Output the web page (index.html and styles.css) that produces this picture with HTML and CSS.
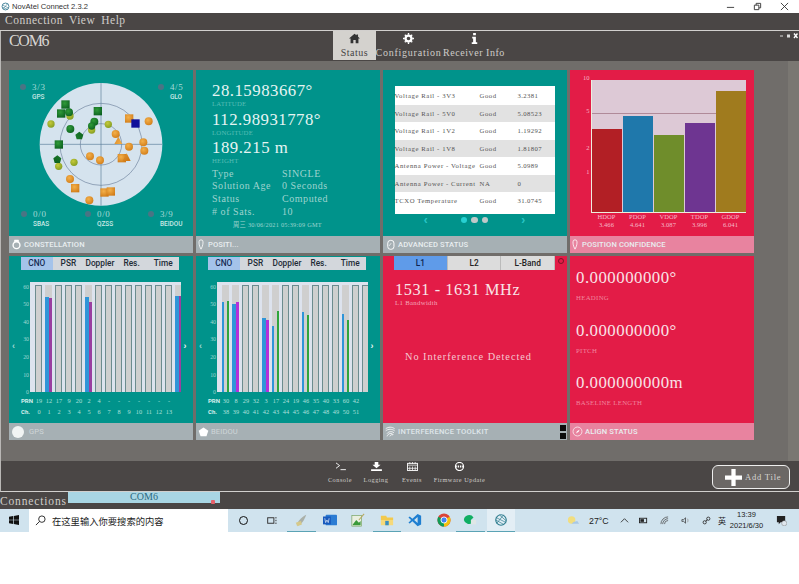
FILE: index.html
```html
<!DOCTYPE html>
<html lang="en">
<head>
<meta charset="utf-8">
<title>NovAtel Connect 2.3.2</title>
<link rel="stylesheet" href="styles.css">
</head>
<body>
<div class="app">
  <header class="titlebar">
    <div class="title-left">
      <svg class="app-logo" viewBox="0 0 12 12"><circle cx="6" cy="6" r="4.6" fill="none" stroke="#3d7f96" stroke-width="1.2"/><path d="M2 4l8 4M3 9l6-7M2 7l7 3" stroke="#3d7f96" stroke-width=".8"/></svg>
      <span>NovAtel Connect 2.3.2</span>
    </div>
    <div class="win-btns">
      <svg viewBox="0 0 10 10"><path d="M1 6h8" stroke="#333"/></svg>
      <svg viewBox="0 0 10 10"><path d="M1.500 3.500h5v5h-5zM3.500 3.500v-2h5v5h-2" fill="none" stroke="#333"/></svg>
      <svg viewBox="0 0 10 10"><path d="M1 1l8 8M9 1l-8 8" stroke="#333"/></svg>
    </div>
  </header>
  <nav class="menubar"><span>Connection</span><span>View</span><span>Help</span></nav>

  <div class="frame">
    <div class="subhead">
      <div class="com-title">COM6</div>
      <div class="nav-tabs">
        <div class="nav-tab active">
          <svg viewBox="0 0 14 12"><path d="M7 0L0 6h2v6h3.500V8h3v4H12V6h2l-2.500-2.200V1h-2v1z" fill="#333"/></svg>
          <span>Status</span>
        </div>
        <div class="nav-tab cfg">
          <svg viewBox="0 0 12 12"><circle cx="6" cy="6" r="3.200" fill="none" stroke="#fff" stroke-width="2.400"/><path d="M6 0v12M0 6h12M2 2l8 8M10 2l-8 8" stroke="#fff" stroke-width="1.500" stroke-dasharray="2 8 2 0"/></svg>
          <span>Configuration</span>
        </div>
        <div class="nav-tab info">
          <svg viewBox="0 0 12 12"><path d="M4.500 0h3v2.500h-3zM3.500 4h4v6h1.500v2H3v-2h1.500V6h-1z" fill="#fff"/></svg>
          <span>Receiver Info</span>
        </div>
      </div>
      <div class="frame-ctrl">
        <svg viewBox="0 0 18 6"><path d="M0 3h3" stroke="#ddd"/><rect x="7" y="1.500" width="3" height="3" fill="#ddd"/><path d="M14 .500l3.500 4.500M17.500 .500L14 5" stroke="#fff" stroke-width="1.400"/></svg>
      </div>
    </div>

    <main class="workspace">
      <div class="tiles">
        <!-- Constellation -->
        <section class="tile r1">
          <div class="body teal sky">
            <svg class="sky-plot" viewBox="0 0 540 498">
              <defs>
                <radialGradient id="or" cx=".4" cy=".35" r=".75"><stop offset="0" stop-color="#f3b04a"/><stop offset="1" stop-color="#d07a16"/></radialGradient>
                <radialGradient id="gr" cx=".4" cy=".35" r=".75"><stop offset="0" stop-color="#2f9a38"/><stop offset="1" stop-color="#0b5f1f"/></radialGradient>
                <radialGradient id="li" cx=".4" cy=".35" r=".75"><stop offset="0" stop-color="#c6c93b"/><stop offset="1" stop-color="#7d9a1e"/></radialGradient>
              </defs>
              <circle cx="273" cy="223" r="184" fill="#d5e3ee"/>
              <g fill="none" stroke="#4c6283" stroke-width="1.500"><circle cx="273" cy="223" r="123"/><circle cx="273" cy="223" r="62"/></g>
              <path d="M273 39v368M89 223h368" stroke="#5a7e9c" stroke-width="2"/>
              <g fill="url(#li)"><circle cx="180" cy="138" r="11"/><circle cx="245" cy="180" r="11"/><circle cx="123" cy="162" r="11"/><circle cx="295" cy="163" r="11"/><circle cx="192" cy="277" r="11"/><circle cx="146" cy="289" r="11"/></g>
              <g fill="url(#gr)">
                <rect x="154" y="91" width="25" height="25"/><rect x="141" y="118" width="25" height="25"/><rect x="251" y="111" width="25" height="25"/><rect x="134" y="211" width="25" height="25"/>
                <circle cx="177" cy="127" r="12"/><circle cx="253" cy="155" r="12"/><circle cx="181" cy="177" r="12"/><circle cx="245" cy="168" r="11"/>
                <path d="M208 185l12 9-4 14h-16l-4-14zM142 256l12 9-4 14h-16l-4-14z"/>
              </g>
              <g fill="url(#or)">
                <rect x="345" y="133" width="25" height="25"/><rect x="323" y="252" width="25" height="25"/><rect x="183" y="342" width="25" height="25"/><rect x="271" y="355" width="25" height="25"/><rect x="290" y="352" width="25" height="25"/>
                <circle cx="416" cy="154" r="12"/><circle cx="317" cy="192" r="12"/><circle cx="400" cy="217" r="12"/><circle cx="357" cy="230" r="12"/><circle cx="403" cy="242" r="12"/><circle cx="240" cy="259" r="12"/><circle cx="270" cy="271" r="12"/><circle cx="180" cy="327" r="12"/><circle cx="238" cy="391" r="12"/>
                <path d="M325 200l12 22h-24zM350 250l12 23h-24z"/>
              </g>
              <rect x="364" y="148" width="25" height="25" fill="#10109a"/>
            </svg>
            <div class="sky-row">
              <div class="stat"><i class="dot"></i><div><b>3/3</b><em>GPS</em></div></div>
              <div class="stat"><i class="dot"></i><div><b>4/5</b><em>GLO</em></div></div>
            </div>
            <div class="sky-row bottom">
              <div class="stat"><i class="dot"></i><div><b>0/0</b><em>SBAS</em></div></div>
              <div class="stat"><i class="dot"></i><div><b>0/0</b><em>QZSS</em></div></div>
              <div class="stat"><i class="dot"></i><div><b>3/9</b><em>BEIDOU</em></div></div>
            </div>
          </div>
          <footer class="foot gray">
            <svg class="foot-ic" viewBox="0 0 16 16"><circle cx="8" cy="9" r="5" fill="none" stroke="#fff" stroke-width="2"/><path d="M5 1h6l1 3H4z" fill="#fff"/></svg>
            <span>CONSTELLATION</span>
          </footer>
        </section>

        <!-- Position -->
        <section class="tile r1">
          <div class="body teal pos">
            <div class="big">28.15983667°</div><div class="lab">LATITUDE</div>
            <div class="big">112.98931778°</div><div class="lab">LONGITUDE</div>
            <div class="big">189.215 m</div><div class="lab">HEIGHT</div>
            <dl class="pos-list">
              <dt>Type</dt><dd>SINGLE</dd>
              <dt>Solution Age</dt><dd>0 Seconds</dd>
              <dt>Status</dt><dd>Computed</dd>
              <dt># of Sats.</dt><dd>10</dd>
            </dl>
            <div class="stamp">周三 30/06/2021 05:39:09 GMT</div>
          </div>
          <footer class="foot gray">
            <svg class="foot-ic thin" viewBox="0 0 9 16"><path d="M4.500 15C1.500 10 1.500 6 1.500 4a3 3 0 0 1 6 0c0 2 0 6-3 11z" fill="none" stroke="#fff" stroke-width="1.200"/></svg>
            <span>POSITI...</span>
          </footer>
        </section>

        <!-- Advanced status -->
        <section class="tile r1">
          <div class="body teal adv">
            <div class="adv-table">
              <div class="adv-row"><span>Voltage Rail - 3V3</span><span>Good</span><span>3.2381</span></div>
              <div class="adv-row alt"><span>Voltage Rail - 5V0</span><span>Good</span><span>5.08523</span></div>
              <div class="adv-row"><span>Voltage Rail - 1V2</span><span>Good</span><span>1.19292</span></div>
              <div class="adv-row alt"><span>Voltage Rail - 1V8</span><span>Good</span><span>1.81807</span></div>
              <div class="adv-row"><span>Antenna Power - Voltage</span><span>Good</span><span>5.0989</span></div>
              <div class="adv-row alt"><span>Antenna Power - Current</span><span>NA</span><span>0</span></div>
              <div class="adv-row"><span>TCXO Temperature</span><span>Good</span><span>31.0745</span></div>
            </div>
            <div class="pager">
              <span class="chev">‹</span>
              <span class="dots"><i class="on"></i><i></i><i></i></span>
              <span class="chev">›</span>
            </div>
          </div>
          <footer class="foot gray">
            <svg class="foot-ic" viewBox="0 0 16 16"><rect x="4" y="2" width="9" height="13" rx="4" fill="none" stroke="#fff" stroke-width="1.400"/><path d="M6 10l3-4" stroke="#fff"/></svg>
            <span>ADVANCED STATUS</span>
          </footer>
        </section>

        <!-- Position confidence -->
        <section class="tile r1">
          <div class="body red conf">
            <div class="conf-main">
              <div class="conf-axis"><span>10</span><span>5</span><span>2</span><span>1</span></div>
              <div class="conf-plot">
                <i class="conf-line"></i>
                <div class="cbar c1" style="height:63%"></div>
                <div class="cbar c2" style="height:72.500%"></div>
                <div class="cbar c3" style="height:58.500%"></div>
                <div class="cbar c4" style="height:67.500%"></div>
                <div class="cbar c5" style="height:92%"></div>
              </div>
            </div>
            <div class="conf-labels">
              <div>HDOP<br>3.466</div><div>PDOP<br>4.641</div><div>VDOP<br>3.087</div><div>TDOP<br>3.996</div><div>GDOP<br>6.041</div>
            </div>
          </div>
          <footer class="foot pink">
            <svg class="foot-ic thin" viewBox="0 0 9 16"><path d="M4.500 15C1.500 10 1.500 6 1.500 4a3 3 0 0 1 6 0c0 2 0 6-3 11z" fill="none" stroke="#fff" stroke-width="1.200"/></svg>
            <span>POSITION CONFIDENCE</span>
          </footer>
        </section>

        <!-- GPS -->
        <section class="tile r2">
          <div class="body teal track">
            <div class="tabs5"><span class="on">CNO</span><span>PSR</span><span>Doppler</span><span>Res.</span><span>Time</span></div>
            <div class="chart-wrap">
              <span class="side">‹</span>
              <div class="y-axis"><span>60</span><span>50</span><span>40</span><span>30</span><span>20</span><span>10</span><span>0</span></div>
              <div class="chart">
                <div class="col"></div>
                <div class="col wide"><i class="b-blue" style="height:95px"></i><i class="b-pur" style="height:94px"></i></div>
                <div class="col"></div><div class="col"></div><div class="col"></div>
                <div class="col wide"><i class="b-blue" style="height:95px"></i><i class="b-pur" style="height:90px"></i></div>
                <div class="col"></div><div class="col"></div><div class="col"></div><div class="col"></div><div class="col"></div><div class="col"></div><div class="col"></div><div class="col"></div>
                <div class="col wide"><i class="b-blue" style="height:96px"></i><i class="b-pur" style="height:96px"></i></div>
              </div>
              <span class="side">›</span>
            </div>
            <div class="axis-row prn"><b>PRN</b><span>19</span><span>12</span><span>17</span><span>9</span><span>20</span><span>2</span><span>4</span><span>-</span><span>-</span><span>-</span><span>-</span><span>-</span><span>-</span><span>-</span></div>
            <div class="axis-row"><b>Ch.</b><span>0</span><span>1</span><span>2</span><span>3</span><span>4</span><span>5</span><span>6</span><span>7</span><span>8</span><span>9</span><span>10</span><span>11</span><span>12</span><span>13</span></div>
          </div>
          <footer class="foot gray">
            <i class="foot-circle"></i>
            <span class="dim">GPS</span>
          </footer>
        </section>

        <!-- Beidou -->
        <section class="tile r2">
          <div class="body teal track">
            <div class="tabs5"><span class="on">CNO</span><span>PSR</span><span>Doppler</span><span>Res.</span><span>Time</span></div>
            <div class="chart-wrap">
              <span class="side">‹</span>
              <div class="y-axis"><span>60</span><span>50</span><span>40</span><span>30</span><span>20</span><span>10</span><span>0</span></div>
              <div class="chart">
                <div class="col split"><i class="n-blue" style="height:90px"></i><i class="n-gre" style="height:91px"></i></div>
                <div class="col wide"><i class="n-blue" style="height:88px"></i><i class="n-mag" style="height:90px"></i></div>
                <div class="col"></div><div class="col"></div>
                <div class="col wide"><i class="n-blue" style="height:74px"></i><i class="n-mag" style="height:72px"></i></div>
                <div class="col split"><i class="n-blue" style="height:66px"></i><i class="n-gre" style="height:81px"></i></div>
                <div class="col"></div><div class="col"></div>
                <div class="col split"><i class="n-blue" style="height:80px"></i><i class="n-gre" style="height:77px"></i></div>
                <div class="col"></div><div class="col"></div><div class="col"></div>
                <div class="col split"><i class="n-blue" style="height:78px"></i><i class="n-gre" style="height:72px"></i></div>
                <div class="col"></div><div class="col"></div>
              </div>
              <span class="side">›</span>
            </div>
            <div class="axis-row prn"><b>PRN</b><span>30</span><span>8</span><span>29</span><span>32</span><span>3</span><span>17</span><span>24</span><span>19</span><span>46</span><span>35</span><span>40</span><span>33</span><span>60</span><span>42</span></div>
            <div class="axis-row"><b>Ch.</b><span>38</span><span>39</span><span>40</span><span>41</span><span>42</span><span>43</span><span>44</span><span>45</span><span>46</span><span>47</span><span>48</span><span>49</span><span>50</span><span>51</span></div>
          </div>
          <footer class="foot gray">
            <svg class="foot-ic" viewBox="0 0 16 16"><path d="M8 2l7 5-2.700 8H3.700L1 7z" fill="#fff"/></svg>
            <span class="dim">BEIDOU</span>
          </footer>
        </section>

        <!-- Interference -->
        <section class="tile r2 outlined">
          <div class="body red itk">
            <div class="tabs3"><span class="on">L1</span><span>L2</span><span>L-Band</span><i class="tab-close"></i></div>
            <div class="itk-big">1531 - 1631 MHz</div>
            <div class="itk-lab">L1 Bandwidth</div>
            <div class="itk-msg">No Interference Detected</div>
          </div>
          <footer class="foot gray">
            <svg class="foot-ic" viewBox="0 0 16 16"><path d="M1 4c4-3 9-3 13 0M1 7c4-3 9-3 13 0M3 11c2-3 7-4 10-1M3 15c1-4 7-6 9-2M7 15c1-2 3-3 4-2" fill="none" stroke="#fff" stroke-width="1.200"/></svg>
            <span class="lighter">INTERFERENCE TOOLKIT</span>
            <div class="foot-sq"><i></i><i></i></div>
          </footer>
        </section>

        <!-- Align -->
        <section class="tile r2">
          <div class="body red align">
            <div class="al-big">0.000000000°</div><div class="al-lab">HEADING</div>
            <div class="al-big">0.000000000°</div><div class="al-lab">PITCH</div>
            <div class="al-big">0.000000000m</div><div class="al-lab">BASELINE LENGTH</div>
          </div>
          <footer class="foot pink">
            <svg class="foot-ic" viewBox="0 0 16 16"><circle cx="8" cy="8" r="6.500" fill="none" stroke="#fff"/><path d="M11 5L7 8l-1 3 4-3z" fill="#fff"/></svg>
            <span>ALIGN STATUS</span>
          </footer>
        </section>
      </div>
    </main>

    <div class="toolbar">
      <div class="tools">
        <div class="tool t-con"><svg viewBox="0 0 12 10"><path d="M1 1l4 3-4 3M6 8.500h6" fill="none" stroke="#fff"/></svg><span>Console</span></div>
        <div class="tool t-log"><svg viewBox="0 0 12 10"><path d="M4 0h4v3h2.500L6 7 1.500 3H4zM0 8h12v2H0z" fill="#fff"/></svg><span>Logging</span></div>
        <div class="tool t-eve"><svg viewBox="0 0 12 10"><rect x=".5" y="1.500" width="11" height="8" fill="none" stroke="#fff"/><path d="M1 3.500h10M3 0v2M6 0v2M9 0v2M3 5v4M6 5v4M9 5v4M1 7h10" stroke="#fff" stroke-width=".8"/></svg><span>Events</span></div>
        <div class="tool t-fw"><svg viewBox="0 0 12 10"><ellipse cx="6" cy="5" rx="4.500" ry="4.500" fill="none" stroke="#fff" stroke-width="1.300"/><path d="M1.500 5h9" stroke="#fff" stroke-width="2" stroke-dasharray="1.500 1"/></svg><span>Firmware Update</span></div>
      </div>
      <button class="add-tile"><svg viewBox="0 0 16 16"><path d="M6 0h4v6h6v4h-6v6H6v-6H0V6h6z" fill="#fff"/></svg><span>Add Tile</span></button>
    </div>
  </div>

  <div class="connbar">
    <span class="conn-label">Connections</span>
    <div class="conn-tab"><span>COM6</span><i></i></div>
  </div>

  <div class="taskbar">
    <svg class="tb-win" viewBox="0 0 12 12"><path d="M0 2l5-.8V5.600H0zM5.800 1.100L12 0v5.600H5.800zM0 6.400h5v4.400l-5-.8zM5.800 6.400H12V12l-6.200-1.100z" fill="#111"/></svg>
    <div class="tb-search">
      <svg viewBox="0 0 12 12"><circle cx="7.500" cy="4.500" r="3.500" fill="none" stroke="#222"/><path d="M5 7l-4 4" stroke="#222"/></svg>
      <span>在这里输入你要搜索的内容</span>
    </div>
    <div class="tb-apps">
      <i class="tb-cortana"></i>
      <svg class="tb-app" viewBox="0 0 16 14"><rect x="1" y="3" width="9" height="8" fill="none" stroke="#333" stroke-width="1.400"/><path d="M13 2v2M13 6v2M13 10v2" stroke="#333" stroke-width="1.400"/></svg>
      <div class="tb-slot act"><svg viewBox="0 0 16 16"><path d="M3 14c1-4 5-9 11-12-2 5-4 10-9 12z" fill="#aab0a8"/><path d="M2 11l6-2 1 4-5 2z" fill="#d6c98a"/></svg></div>
      <div class="tb-slot"><svg viewBox="0 0 16 16"><rect x="3" y="2" width="13" height="12" rx="1" fill="#2b7cd3"/><rect x="0" y="4" width="9" height="9" fill="#185abd"/><path d="M2 6l1 5 1.500-3 1.500 3 1-5" fill="none" stroke="#fff" stroke-width=".7"/></svg></div>
      <div class="tb-slot"><svg viewBox="0 0 16 16"><rect x="1" y="3" width="11" height="12" fill="#e9efe0" stroke="#6b9a52" stroke-width=".7"/><path d="M2 13l4-5 3 3 2-2v5H2z" fill="#3a9a3a"/><path d="M9 8l6-7" stroke="#b8a860" stroke-width="1.200"/></svg></div>
      <div class="tb-slot act"><svg viewBox="0 0 16 16"><path d="M1 3h6l1 2h7v3H1z" fill="#f2c94c"/><path d="M1 8h14v6H1z" fill="#f6d97a"/><rect x="6" y="9" width="4" height="5" fill="#3a8fc2"/></svg></div>
      <div class="tb-slot"><svg viewBox="0 0 16 16"><path d="M11 1l4 2v10l-4 2-6-5.500L2 12 0.500 11 3.500 8 .5 5 2 4l3 2.500z" fill="#1f7fd1"/><path d="M11 4.500L7 8l4 3.500z" fill="#cfe3ee"/></svg></div>
      <div class="tb-slot"><svg viewBox="0 0 16 16"><circle cx="8" cy="8" r="7.500" fill="#db4437"/><path d="M8 8L14.500 4.300A7.500 7.500 0 0 1 8 15.500z" fill="#f4c20d"/><path d="M8 8L8 15.500A7.500 7.500 0 0 1 1.500 4.300z" fill="#0f9d58"/><circle cx="8" cy="8" r="3.500" fill="#4285f4" stroke="#fff"/></svg></div>
      <div class="tb-slot act green"><svg viewBox="0 0 16 16"><path d="M1 8a6 6 0 0 1 11-3l-3 3 2 3a6 6 0 0 1-10-3z" fill="#0fae63"/><rect x="9" y="8" width="6" height="5" fill="#dfe7e6"/></svg></div>
      <div class="tb-slot act cur"><svg viewBox="0 0 16 16"><circle cx="8" cy="8" r="6" fill="none" stroke="#2f7d8f" stroke-width="1.300"/><path d="M2 5l12 6M3 12l8-10M2 8l9 5M6 2l8 7" stroke="#2f7d8f" stroke-width=".8"/></svg></div>
    </div>
    <div class="tb-tray">
      <svg class="tr-weather" viewBox="0 0 16 12"><circle cx="6" cy="5" r="4" fill="#f1de80"/><path d="M6 9h8l-2-3-4 1z" fill="#a8c8e6"/></svg>
      <span class="tr-temp">27°C</span>
      <svg class="tr-ic tr-up" viewBox="0 0 10 8"><path d="M1 6l4-4 4 4" fill="none" stroke="#333"/></svg>
      <svg class="tr-ic" viewBox="0 0 10 8"><rect x=".5" y="1.500" width="8" height="5" fill="none" stroke="#222"/><rect x="1.500" y="2.500" width="4" height="3" fill="#222"/></svg>
      <svg class="tr-ic" viewBox="0 0 10 10"><path d="M1 9a8 8 0 0 1 8-8M3 9a6 6 0 0 1 6-6M5 9a4 4 0 0 1 4-4" fill="none" stroke="#444" stroke-width=".8"/></svg>
      <svg class="tr-ic" viewBox="0 0 10 10"><path d="M1 4h2l2-2v6L3 6H1z" fill="none" stroke="#333" stroke-width=".8"/><path d="M7 3c1 1 1 3 0 4" fill="none" stroke="#999"/></svg>
      <svg class="tr-ic tr-last" viewBox="0 0 10 10"><circle cx="3" cy="7" r="1.800" fill="none" stroke="#333"/><circle cx="7" cy="3" r="1.800" fill="none" stroke="#333"/><path d="M4 6l2-2" stroke="#333"/></svg>
      <span class="tr-lang">英</span>
      <div class="tr-clock"><span>13:39</span><span>2021/6/30</span></div>
      <svg class="tr-note" viewBox="0 0 12 12"><path d="M1 1h9v7H5L3 10V8H1z" fill="#222"/><circle cx="9" cy="9" r="2.800" fill="#dfe7ee" stroke="#777" stroke-width=".5"/></svg>
    </div>
  </div>
  <div class="blank"></div>
</div>
</body>
</html>
```

FILE: styles.css
```css
* { box-sizing: border-box; }
html, body { margin: 0; padding: 0; background: #fff; }
.app { width: 799px; height: 584px; overflow: hidden; display: flex; flex-direction: column; font-family: "Liberation Serif", serif; }

/* title */
.titlebar { height: 13px; background: #fff; display: flex; justify-content: space-between; align-items: center; font: 7.600px/13px "Liberation Sans", sans-serif; color: #333; }
.title-left { display: flex; align-items: center; gap: 2px; padding-left: 1px; }
.app-logo { width: 9px; height: 9px; }
.win-btns { display: flex; gap: 18px; padding-right: 10px; }
.win-btns svg { width: 9px; height: 9px; }

/* menu */
.menubar { height: 18px; background: #4a4645; border-bottom: 1px solid #d2d0ce; padding-left: 5px; display: flex; gap: 6px; color: #cfcdc9; font-size: 11.500px; line-height: 15px; letter-spacing: .5px; }

/* frame */
.frame { height: 461px; border-left: 1px solid #b9b7b5; display: flex; flex-direction: column; border-bottom: 1px solid #d2d0ce; flex: none; }
.subhead { height: 30px; background: #4a4645; display: flex; position: relative; padding-left: 8px; flex: none; }
.com-title { color: #d8d6d3; font-size: 16px; line-height: 19px; width: 324px; letter-spacing: -1.300px; }
.nav-tabs { display: flex; }
.nav-tab { display: flex; flex-direction: column; align-items: center; color: #cfcdc9; font-size: 10px; letter-spacing: .5px; height: 29px; padding-top: 2px; line-height: 12px; white-space: nowrap; }
.nav-tab svg { width: 11px; height: 11px; margin-bottom: 3px; }
.nav-tab.active { background: #d4d2ce; color: #444; width: 43px; }
.nav-tab.cfg { width: 65px; letter-spacing: .75px; }
.nav-tab.info { width: 66px; letter-spacing: .55px; }
.frame-ctrl { position: absolute; right: 1px; top: 2px; width: 18px; height: 6px; display: flex; }
.frame-ctrl svg { width: 18px; height: 6px; }

.workspace { height: 400px; flex: none; background: #706d6a; padding: 9px 0 0 8px; border-right: 11px solid #7a7772; }
.tiles { display: grid; grid-template-columns: repeat(4, 183.500px); grid-template-rows: 183px 184px; column-gap: 3.500px; row-gap: 3px; }
.tile { display: flex; flex-direction: column; min-width: 0; }
.tile.outlined { outline: 1px solid #d6dbde; outline-offset: -1px; }
.body { flex: 1; min-height: 0; position: relative; }
.teal { background: #00938b; }
.red { background: #e31c47; }

.foot { height: 17px; flex: none; display: flex; align-items: center; padding-left: 1.500px; gap: 2.500px; color: #e9eef0; font: 500 7.600px/17px Roboto, sans-serif; letter-spacing: .1px; position: relative; }
.gray { background: #a6b0b4; }
.pink { background: #e8839f; }
.foot-ic { width: 11px; height: 13px; flex: none; }
.foot-ic.thin { width: 6px; margin-right: 2px; }
.foot-circle { width: 12px; height: 12px; border-radius: 50%; background: #f1f4f4; margin-left: 1px; margin-right: 3px; }
.dim { color: #cfd6d8; font-weight: 400; }
.lighter { color: #dfe6ea; letter-spacing: .25px; }
.foot-sq { position: absolute; right: 1px; top: 2px; display: flex; flex-direction: column; gap: 2px; }
.foot-sq i { width: 6px; height: 6px; background: #0c0c0c; display: block; }

/* constellation */
.sky { display: flex; flex-direction: column; justify-content: space-between; padding: 13px 9px 6px 11px; }
.sky-plot { position: absolute; left: 1px; top: 0; width: 180px; height: 166px; }
.sky-row { display: flex; justify-content: space-between; position: relative; }
.stat { display: flex; gap: 6px; }
.dot { width: 6px; height: 6px; border-radius: 50%; background: #4a7484; margin-top: 1px; flex: none; }
.stat b { display: block; font-weight: 400; font-size: 9px; line-height: 9px; color: #a6dad6; letter-spacing: .7px; }
.stat em { display: block; font: 500 6.500px/11px Roboto, sans-serif; color: #c9e8e5; }
.sky-row.bottom { padding-left: 1px; padding-right: 1px; }
.sky-row.bottom .stat:nth-child(2) { margin-left: 1px; }

/* position */
.pos { padding: 12px 0 0 16px; color: #e6f5f3; }
.big { font-size: 16.800px; line-height: 17px; height: 17px; letter-spacing: .5px; }
.lab { font-size: 6.800px; line-height: 9px; height: 9px; margin-bottom: 2.500px; color: #57bdb5; letter-spacing: .2px; }
.pos-list { margin: 1.500px 0 0; display: grid; grid-template-columns: 70px auto; font-size: 10px; line-height: 12.800px; letter-spacing: .55px; color: #9fd4cf; }
.pos-list dt, .pos-list dd { margin: 0; white-space: nowrap; }
.stamp { margin: 0 0 0 21px; padding-top: 2px; font-family: "Liberation Serif", "Noto Sans CJK SC", serif; font-size: 6.300px; line-height: 8px; color: #9fd4cf; letter-spacing: .25px; }

/* advanced */
.adv { padding: 15.500px 0 0 11.500px; }
.adv-table { width: 160px; height: 128.500px; background: #fff; padding-top: 1.500px; }
.adv-row { height: 17.500px; display: grid; grid-template-columns: 85px 38px auto; padding-left: 0; align-items: center; font-size: 6.700px; color: #555; letter-spacing: .6px; white-space: nowrap; }
.adv-row span:last-child { letter-spacing: .4px; }
.adv-row.alt { background: #e2e2e2; }
.pager { display: flex; justify-content: center; align-items: center; width: 160px; gap: 33px; color: #2fd0d0; height: 12px; }
.chev { color: #28c6c6; font: 700 12px/12px "Liberation Sans", sans-serif; }
.dots { display: flex; gap: 4px; }
.dots i { width: 6.500px; height: 6.500px; background: #bfc9c9; border-radius: 50%; }
.dots i.on { background: #27d0d2; }

/* confidence */
.conf { padding: 10px 7.500px 0 13px; color: #f5b6c4; }
.conf-main { display: flex; height: 133px; }
.conf-axis { width: 8px; position: relative; font-size: 6.500px; }
.conf-axis span { position: absolute; right: 1px; }
.conf-axis span:nth-child(1) { top: -6px; }
.conf-axis span:nth-child(2) { top: 27px; }
.conf-axis span:nth-child(3) { top: 64px; }
.conf-axis span:nth-child(4) { top: 88px; }
.conf-plot { flex: 1; background: #ddc9d6; display: flex; gap: 1px; align-items: flex-end; padding-left: .5px; position: relative; border-bottom: 1px solid #eed; border-left: 1px solid #eed; }
.conf-line { position: absolute; left: 0; right: 30px; top: 33px; height: 1px; background: #b08a99; }
.cbar { width: 30px; position: relative; }
.c1 { background: #b21f25; } .c2 { background: #1f78ab; } .c3 { background: #6f8d2b; } .c4 { background: #6e3591; } .c5 { background: #a07b1e; }
.conf-labels { display: flex; padding-left: 8px; font-size: 6.500px; line-height: 8px; color: #f6b9c8; text-align: center; margin-top: 0; letter-spacing: .1px; }
.conf-labels div { width: 31px; }

/* tracking */
.track { color: #aee0db; }
.tabs5 { display: flex; margin: .500px 0 0 12px; width: 158px; height: 13.500px; background: #d3d7dc; font: 500 8.300px/13.500px Roboto, sans-serif; color: #222c36; }
.tabs5 span { flex: 1; text-align: center; }
.tabs5 span.on { background: #a4c3ea; color: #172c54; }
.chart-wrap { display: flex; height: 110px; margin-top: 12px; position: relative; }
.side { position: absolute; top: 59px; font: 700 9px/10px "Liberation Sans", sans-serif; color: #9fd6d2; left: 3px; }
.side:last-child { left: auto; right: 6px; color: #e3f4f2; }
.y-axis { width: 21px; padding-right: 1px; flex: none; position: relative; margin-top: 1.500px; height: 112px; display: flex; flex-direction: column; justify-content: space-between; align-items: flex-end; font-size: 5.800px; line-height: 6px; color: #9fd6d2; }
.chart { width: 151px; background: #dde3ee; display: flex; gap: 3px; padding: 3px 0 0 5px; align-items: stretch; overflow: hidden; }
.col { flex: none; width: 7px; background: #cfcfcf; border: 1px solid #6d8c8f; border-bottom: 0; display: flex; align-items: flex-end; position: relative; }
.col.wide { border: 0; }
.col.wide i { flex: 1; display: block; }
.col.split { justify-content: space-between; border: 0; }
.b-blue { background: #2f95d8; }
.b-pur { background: #9a3fa0; }
.n-blue { width: 2px; background: #2f95d8; display: block; }
.n-gre { width: 2px; background: #2fa53c; display: block; }
.n-mag { width: 3px; background: #b62fd8; display: block; }
.axis-row { display: flex; height: 11px; margin-top: 0; font-size: 6.300px; line-height: 11px; padding-left: 12px; }
.axis-row.prn { margin-top: 2.500px; }
.axis-row b { width: 12px; font: 700 6px/11px Roboto, sans-serif; color: #d8f0ed; flex: none; margin-right: 1px; }
.axis-row span { width: 10px; text-align: center; flex: none; }

/* interference */
.itk { color: #f7d6dd; }
.tabs3 { display: flex; margin-left: 11px; width: 161px; height: 14px; font: 500 8.300px/14px Roboto, sans-serif; color: #222; position: relative; }
.tabs3 span { flex: 1; text-align: center; background: #dcdcdc; border-right: 1px solid #bbb; }
.tabs3 span.on { background: #5f9be9; color: #0d2452; }
.tab-close { position: absolute; right: -9px; top: 2px; width: 6px; height: 6px; border: 1px solid #7c1526; border-radius: 50%; }
.itk-big { font-size: 16.300px; line-height: 18px; margin: 11px 0 0 12px; letter-spacing: .6px; color: #f8e4e8; }
.itk-lab { font-size: 6.800px; line-height: 8px; margin-left: 12px; color: #f3a7b7; letter-spacing: .3px; }
.itk-msg { font-size: 10.300px; line-height: 12px; margin: 44px 0 0 22px; letter-spacing: .95px; color: #f5c9d2; }

/* align */
.align { padding: 13px 0 0 6px; color: #f9e3e8; }
.al-big { font-size: 16.800px; line-height: 17px; letter-spacing: .5px; }
.al-lab { font-size: 6.800px; line-height: 10px; margin: 7px 0 18.500px; color: #f0859e; letter-spacing: .3px; }

/* toolbar */
.toolbar { flex: 1; background: #4a4645; position: relative; display: flex; justify-content: space-between; padding: 0 9px 0 0; }
.tools { display: flex; margin-left: 326px; }
.tool { display: flex; flex-direction: column; align-items: center; color: #cfcdc9; font-size: 6.300px; letter-spacing: .5px; line-height: 9px; white-space: nowrap; }
.tool svg { width: 11px; height: 9px; margin: 1px 0 3.500px; }
.t-con { width: 26px; }
.t-log { width: 44px; margin-left: 1px; }
.t-eve { width: 28px; }
.t-fw { width: 62px; margin-left: 2.500px; }
.add-tile { width: 78px; height: 24px; background: #6b6765; border: 1px solid #eee; border-radius: 6px; display: flex; align-items: center; padding: 0 0 0 12px; gap: 3px; color: #d8d6d3; font-family: "Liberation Serif", serif; font-size: 8.500px; letter-spacing: .8px; margin-top: 4px; }
.add-tile svg { width: 17px; height: 17px; }

/* connections */
.connbar { height: 17px; flex: none; background: #4a4645; position: relative; display: flex; }
.conn-label { color: #cfcdc9; font-size: 11.500px; line-height: 18px; letter-spacing: .85px; width: 68px; white-space: nowrap; }
.conn-tab { width: 152px; height: 10.500px; background: #a9d6e4; color: #2c6a82; text-align: center; font-size: 10px; line-height: 10px; position: relative; }
.conn-tab i { position: absolute; right: 5px; bottom: -1px; width: 4px; height: 4px; background: #e8616a; border-radius: 1px; }

/* taskbar */
.taskbar { height: 23px; flex: none; background: #d0e3ee; display: flex; align-items: stretch; position: relative; font-family: "Noto Sans CJK SC", "Liberation Sans", sans-serif; color: #222; }
.tb-win { width: 10px; height: 10px; margin: 6px 0 0 9px; }
.tb-search { width: 199px; margin-left: 10px; background: #fff; display: flex; align-items: center; gap: 6px; padding-left: 6px; font-size: 9.300px; }
.tb-search svg { width: 11px; height: 11px; }
.tb-apps { display: flex; align-items: center; padding-left: 11px; }
.tb-cortana { width: 9px; height: 9px; border: 1.500px solid #111; border-radius: 50%; margin-right: 19px; }
.tb-app { width: 11px; height: 11px; margin-right: 9px; }
.tb-slot { width: 28.500px; height: 23px; display: flex; align-items: center; justify-content: center; border-bottom: 1.500px solid transparent; }
.tb-slot svg { width: 14px; height: 14px; }
.tb-slot.act { border-bottom-color: #5ba3b5; }
.tb-slot.green { margin-left: -2px; }
.tb-slot.cur { background: #e3eef5; margin-left: 2px; }
.tb-tray { position: absolute; left: 566px; top: 0; height: 23px; display: flex; align-items: center; width: 233px; }
.tr-weather { width: 15px; height: 12px; margin-right: 8px; }
.tr-temp { font: 8.800px "Liberation Sans", sans-serif; width: 29px; }
.tr-ic { width: 9px; height: 9px; margin-right: 10px; margin-left: 2px; flex: none; }
.tr-up { margin-right: 8px; }
.tr-last { margin-right: 7px; }
.tr-lang { font-size: 8px; width: 11px; }
.tr-clock { display: flex; flex-direction: column; align-items: center; font: 7.500px/10.500px "Liberation Sans", sans-serif; width: 35px; }
.tr-note { width: 11px; height: 11px; margin-left: 12px; flex: none; }
.blank { flex: 1; background: #fff; }
```
